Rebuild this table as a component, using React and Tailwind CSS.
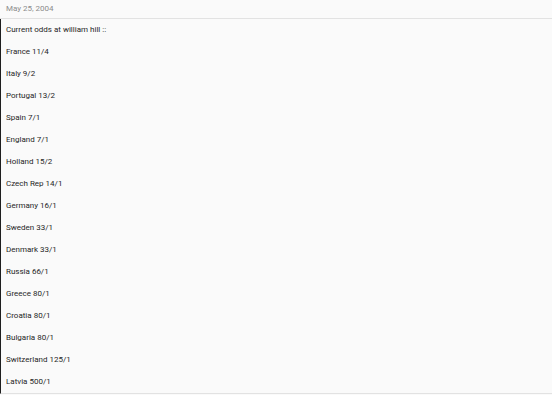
import React from 'react';

const odds = [
  'France 11/4',
  'Italy 9/2',
  'Portugal 13/2',
  'Spain 7/1',
  'England 7/1',
  'Holland 15/2',
  'Czech Rep 14/1',
  'Germany 16/1',
  'Sweden 33/1',
  'Denmark 33/1',
  'Russia 66/1',
  'Greece 80/1',
  'Croatia 80/1',
  'Bulgaria 80/1',
  'Switzerland 125/1',
  'Latvia 500/1',
];

const App = () => {
  return (
    <div className="w-[552px] h-[395px] bg-[#fafafa] overflow-hidden font-[Roboto,'Liberation_Sans',sans-serif]">
      <div className="h-[19px] border-b border-[#e2e2e2] px-[6px] text-[8px] leading-[17px] text-[#8c8c8c]">
        May 25, 2004
      </div>
      <div className="border-l border-[#1e1e1e] border-b border-b-[#e2e2e2] pl-[5px] text-[8px] text-[#262626]">
        <p className="h-[22px] leading-[22px]">Current odds at william hill ::</p>
        {odds.map((line) => (
          <p key={line} className="h-[22px] leading-[22px]">{line}</p>
        ))}
      </div>
    </div>
  );
};

export default App;
